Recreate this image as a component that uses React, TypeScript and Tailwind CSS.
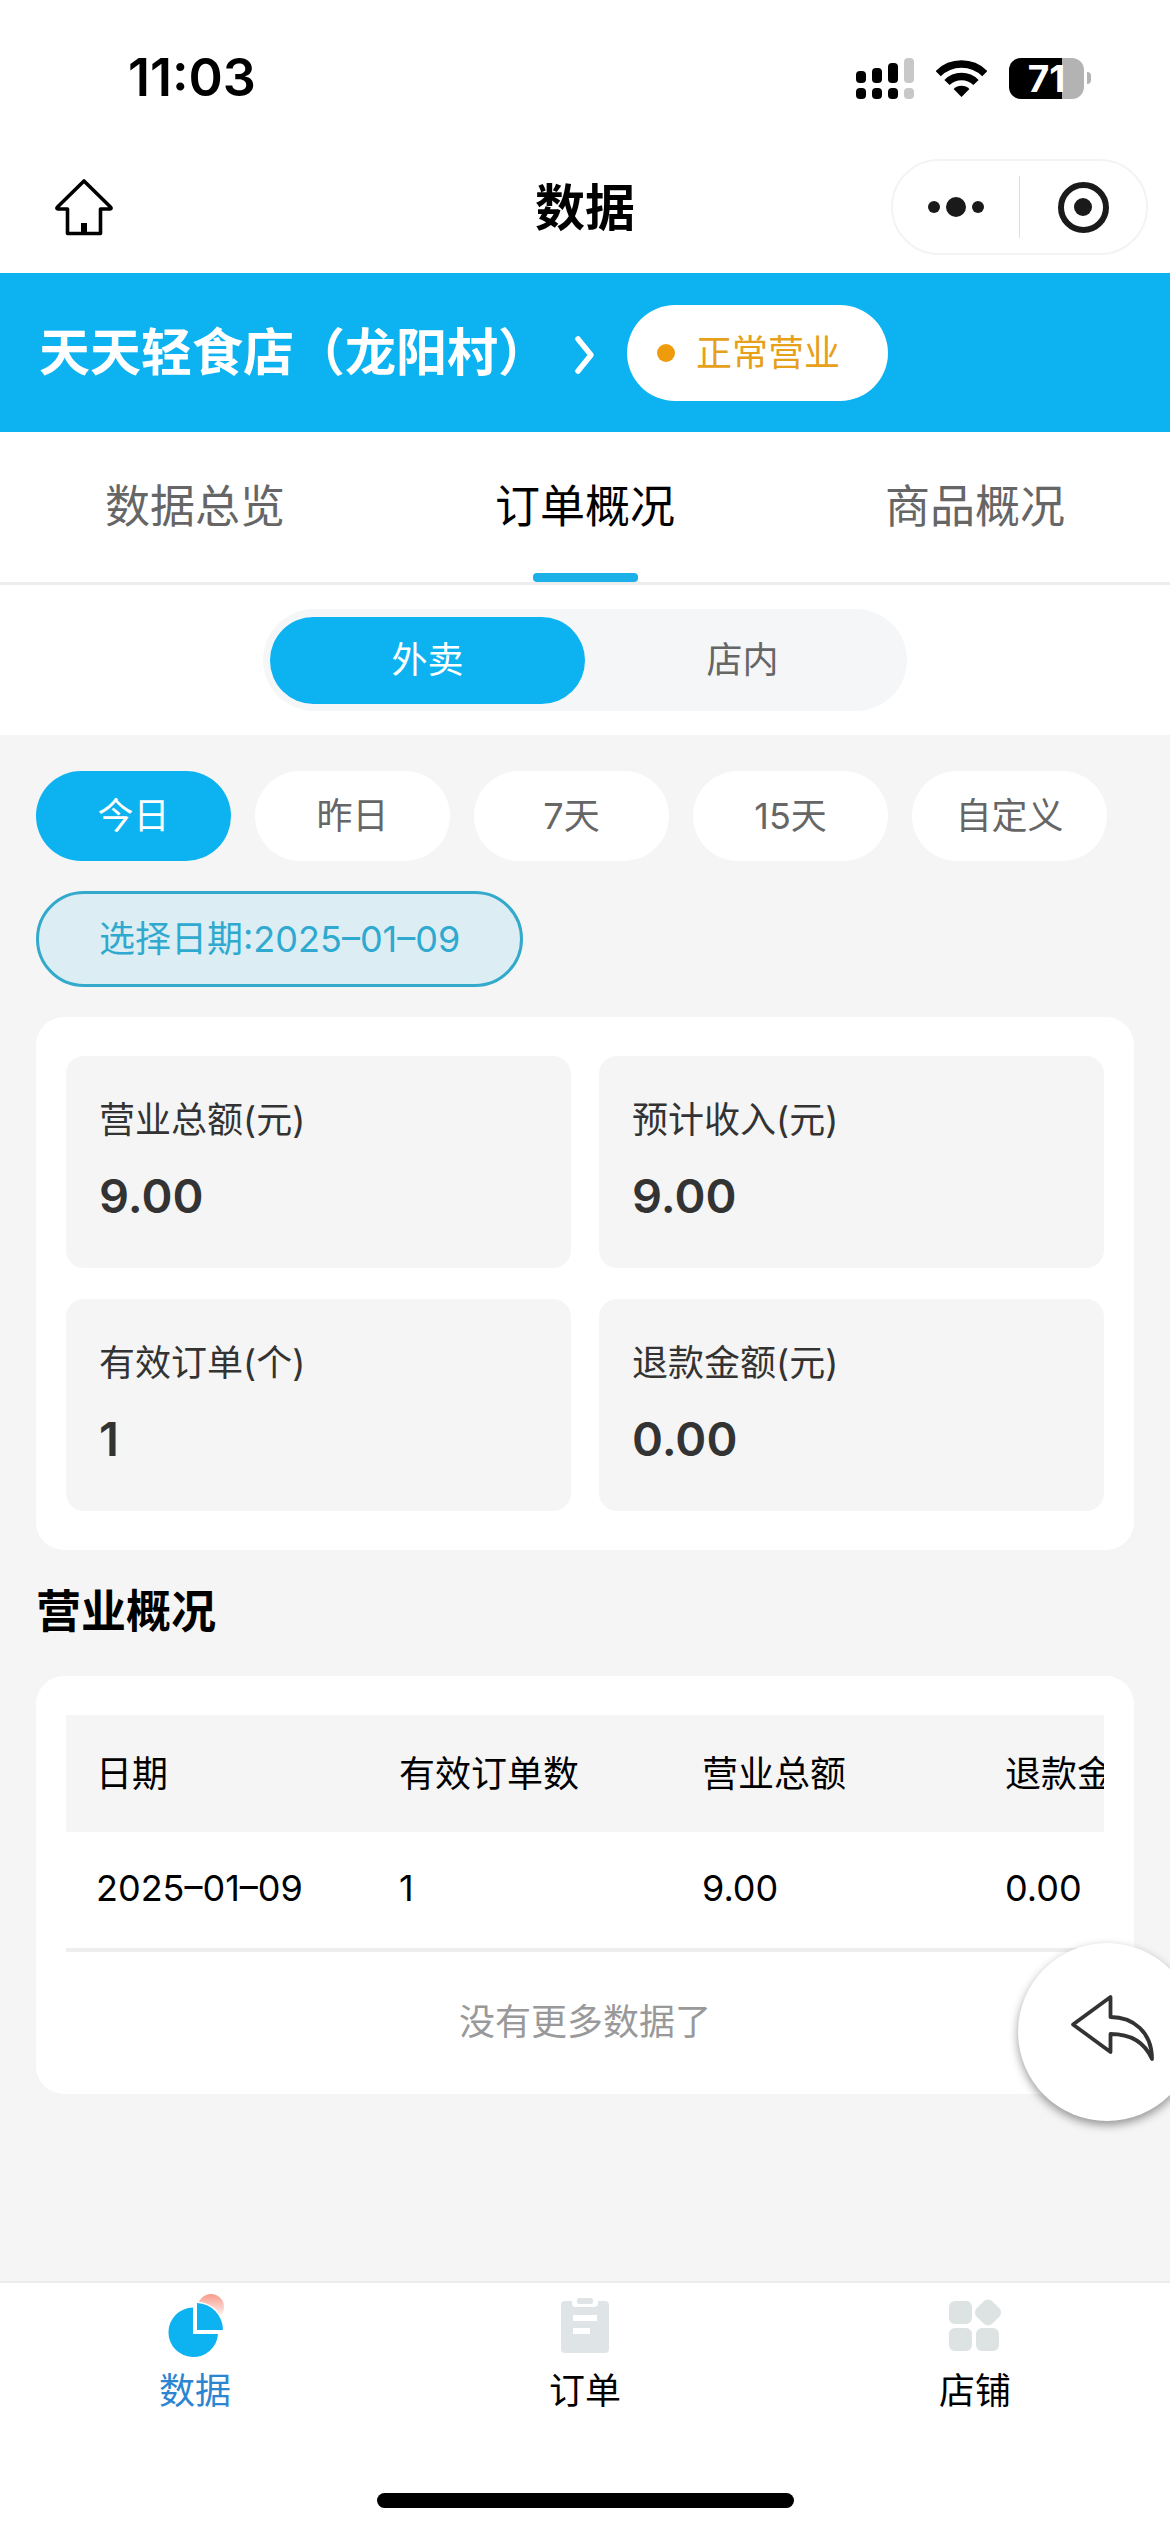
import React, { useState } from "react";

const orderTypes = ["外卖", "店内"];
const ranges = ["今日", "昨日", "7天", "15天", "自定义"];
const stats = [
  { label: "营业总额(元)", value: "9.00" },
  { label: "预计收入(元)", value: "9.00" },
  { label: "有效订单(个)", value: "1" },
  { label: "退款金额(元)", value: "0.00" },
];
const columns = ["日期", "有效订单数", "营业总额", "退款金额"];
const rows = [["2025–01–09", "1", "9.00", "0.00"]];

function SignalIcon() {
  return (
    <svg className="h-[41px] w-[58px]" viewBox="0 0 58 41" aria-hidden="true">
      <rect x="0" y="13" width="10" height="12" rx="4" />
      <rect x="16" y="10" width="10" height="15" rx="4" />
      <rect x="32" y="5" width="10" height="20" rx="4" />
      <rect x="48" y="0" width="10" height="25" rx="4" fill="#c8c8c8" />
      <rect x="0" y="30" width="10" height="11" rx="4" />
      <rect x="16" y="30" width="10" height="11" rx="4" />
      <rect x="32" y="30" width="10" height="11" rx="4" />
      <rect x="48" y="30" width="10" height="11" rx="4" fill="#c8c8c8" />
    </svg>
  );
}

function WifiIcon() {
  return (
    <svg className="h-[37px] w-[51px]" viewBox="0 0 51 37" aria-hidden="true">
      <g fill="none" stroke="#000" strokeWidth="7.4">
        <path d="M2.2 13.7a33 33 0 0 1 46.6 0" />
        <path d="M11 22.5a20.5 20.5 0 0 1 29 0" />
      </g>
      <path d="M25.5 37 17.6 29a11.2 11.2 0 0 1 15.8 0Z" />
    </svg>
  );
}

function HomeIcon() {
  return (
    <svg className="h-[58px] w-[60px]" viewBox="0 0 60 58" aria-hidden="true">
      <path
        d="M13.5 31H4Q2 30.500 3.500 29L30 3L56.500 29Q58 30.500 56 31H46.500V55.500H13.500Z"
        fill="none"
        stroke="#000"
        strokeWidth="3.6"
        strokeLinejoin="round"
      />
      <rect x="27" y="45" width="6" height="10" />
    </svg>
  );
}

function ReplyIcon() {
  return (
    <svg className="h-[70px] w-[86px]" viewBox="0 0 86 70" aria-hidden="true">
      <path
        d="M3 31.500 40.500 4V24C63 24 82 39 82 66C75 50 62 41 40.500 41V59Z"
        fill="none"
        stroke="#333"
        strokeWidth="3.8"
        strokeLinejoin="round"
      />
    </svg>
  );
}

function PieIcon() {
  return (
    <svg className="h-[68px] w-[60px]" viewBox="0 0 60 68" aria-hidden="true">
      <defs>
        <linearGradient id="glow" x1="0" y1="0" x2="0" y2="1">
          <stop offset="0" stopColor="#f79b8a" />
          <stop offset="0.7" stopColor="#fde3df" />
          <stop offset="1" stopColor="#fff" />
        </linearGradient>
      </defs>
      <circle cx="46" cy="16" r="13" fill="url(#glow)" />
      <path d="M32 12A27 27 0 0 1 58 39H32Z" fill="#0cb3f0" stroke="#fff" strokeWidth="3" paintOrder="stroke" />
      <path d="M28 16.500A24.800 24.800 0 1 0 53 43H28Z" fill="#0cb3f0" />
    </svg>
  );
}

function ClipboardIcon() {
  return (
    <svg className="h-[68px] w-[60px]" viewBox="0 0 60 68" aria-hidden="true">
      <rect x="6" y="10" width="48" height="52" rx="4" fill="#dfe4e6" />
      <rect x="17" y="5" width="26" height="11" rx="4" fill="#fff" />
      <rect x="22" y="7" width="16" height="6" rx="2" fill="#dfe4e6" />
      <path d="M18 24h24v6H18zM18 37h17v6H18z" fill="#fff" />
    </svg>
  );
}

function GridIcon() {
  return (
    <svg className="h-[68px] w-[60px]" viewBox="0 0 60 68" fill="#dde3e3" aria-hidden="true">
      <rect x="4" y="10" width="23" height="23" rx="6" />
      <rect x="4" y="37" width="23" height="23" rx="6" />
      <rect x="31" y="37" width="23" height="23" rx="6" />
      <rect x="32" y="10.500" width="22" height="22" rx="6" transform="rotate(45 43 21.500)" />
    </svg>
  );
}

const navItems = [
  { label: "数据", icon: <PieIcon />, active: true },
  { label: "订单", icon: <ClipboardIcon />, active: false },
  { label: "店铺", icon: <GridIcon />, active: false },
];

export default function App() {
  const [orderType, setOrderType] = useState("外卖");
  const [range, setRange] = useState("今日");

  return (
    <div className="flex min-h-screen flex-col overflow-x-clip bg-[#f5f5f5] font-[Inter,'Noto_Sans_CJK_SC',sans-serif] text-4xl text-black">
      <header className="bg-white">
        <div className="flex h-[144px] items-center justify-between pt-3 pr-[79px] pl-32">
          <span className="text-[52px] leading-[60px] font-semibold">11:03</span>
          <div className="flex items-center gap-[22px]">
            <SignalIcon />
            <WifiIcon />
            <div className="flex items-center gap-[3px]">
              <div className="flex h-[41px] w-[75px] items-center justify-center rounded-xl bg-linear-to-r from-black from-71% to-[#b3b3b3] to-71% text-[37px] leading-[41px] font-bold text-white">
                71
              </div>
              <div className="h-3 w-1 rounded-r-full bg-[#b3b3b3]" />
            </div>
          </div>
        </div>
        <div className="grid h-[129px] grid-cols-3 items-start px-[22px]">
          <button type="button" aria-label="首页" className="mt-[34px] ml-8 justify-self-start">
            <HomeIcon />
          </button>
          <h1 className="mt-[34px] text-center text-[50px] leading-[60px] font-bold">数据</h1>
          <div className="mt-[15px] flex h-24 w-[257px] items-center justify-self-end rounded-full border-2 border-[#f3f3f3]">
            <button type="button" aria-label="更多" className="flex flex-1 items-center justify-center gap-1.5">
              <span className="size-3 rounded-full bg-[#1a1a1a]" />
              <span className="size-5 rounded-full bg-[#1a1a1a]" />
              <span className="size-3 rounded-full bg-[#1a1a1a]" />
            </button>
            <span className="h-[62px] w-px bg-[#dedede]" />
            <button type="button" aria-label="关闭" className="flex flex-1 items-center justify-center">
              <span className="flex size-[51px] items-center justify-center rounded-full border-[6px] border-[#1a1a1a]">
                <span className="size-[18px] rounded-full bg-[#1a1a1a]" />
              </span>
            </button>
          </div>
        </div>
      </header>

      <section className="flex h-[159px] items-center bg-[#0cb3f0] pl-[39px] text-white">
        <button type="button" className="flex items-center">
          <span className="text-[51px] leading-[60px] font-bold">天天轻食店（龙阳村）</span>
          <svg className="mt-1 ml-6 h-10 w-[26px]" viewBox="0 0 26 40" aria-hidden="true">
            <path d="M5 4 18 20 5 36" fill="none" stroke="#fff" strokeWidth="5.500" strokeLinecap="round" strokeLinejoin="round" />
          </svg>
        </button>
        <span className="ml-7 flex h-24 w-[261px] items-center rounded-full bg-white pl-[30px] text-[#e6a01a]">
          <span className="mr-[21px] size-[18px] rounded-full bg-[#ee9c0c]" />
          正常营业
        </span>
      </section>

      <nav className="grid h-[153px] grid-cols-3 border-b-[3px] border-[#ededed] bg-white text-[45px] leading-[60px]">
        <a href="#overview" className="pt-[45px] text-center text-[#666]">数据总览</a>
        <a href="#orders" aria-current="page" className="flex flex-col items-center justify-between pt-[45px]">
          订单概况
          <span className="h-[9px] w-[105px] rounded-sm bg-[#1cb0e8]" />
        </a>
        <a href="#goods" className="pt-[45px] text-center text-[#666]">商品概况</a>
      </nav>

      <div className="flex justify-center bg-white py-6">
        <div className="flex h-[102px] w-[644px] items-center rounded-full bg-[#f4f6f8] px-[7px]">
          {orderTypes.map((type) => (
            <button
              key={type}
              type="button"
              aria-pressed={type === orderType}
              onClick={() => setOrderType(type)}
              className={
                type === orderType
                  ? "h-[87px] flex-1 rounded-full bg-[#0cb3f0] text-white"
                  : "h-[87px] flex-1 rounded-full text-[#666]"
              }
            >
              {type}
            </button>
          ))}
        </div>
      </div>

      <main className="flex-1 px-9 pt-9">
        <div className="flex gap-6">
          {ranges.map((item) => (
            <button
              key={item}
              type="button"
              aria-pressed={item === range}
              onClick={() => setRange(item)}
              className={
                item === range
                  ? "h-[90px] w-[195px] rounded-full bg-[#0cb3f0] text-white"
                  : "h-[90px] w-[195px] rounded-full bg-white text-[#666]"
              }
            >
              {item}
            </button>
          ))}
        </div>
        <button
          type="button"
          className="mt-[30px] block h-24 rounded-full border-[3px] border-[#33a9cc] bg-[#dceef3] px-[60px] text-[#2fa9cf]"
        >
          选择日期:2025–01–09
        </button>

        <section className="mt-[30px] grid grid-cols-2 gap-x-7 gap-y-[31px] rounded-[28px] bg-white px-[30px] py-[39px]">
          {stats.map((stat) => (
            <div key={stat.label} className="h-[212px] rounded-[18px] bg-[#f5f5f5] px-[33px] pt-[34px] text-[#333]">
              <p className="leading-[60px]">{stat.label}</p>
              <p className="mt-4 text-[47px] leading-[60px] font-semibold">{stat.value}</p>
            </div>
          ))}
        </section>

        <h2 className="mt-8 text-[45px] leading-[60px] font-bold">营业概况</h2>

        <section className="mt-[34px] rounded-[28px] bg-white px-[30px] pt-[39px] pb-[42px]">
          <div className="overflow-x-auto [scrollbar-width:none]">
            <table className="w-[1212px] table-fixed text-left">
              <thead className="bg-[#f5f5f5]">
                <tr className="h-[117px]">
                  {columns.map((column) => (
                    <th key={column} scope="col" className="pl-[30px] font-normal">{column}</th>
                  ))}
                </tr>
              </thead>
              <tbody>
                {rows.map((row) => (
                  <tr key={row[0]} className="h-[118px] border-b-4 border-[#eee]">
                    {row.map((cell, i) => (
                      <td key={columns[i]} className="pb-1 pl-[30px]">{cell}</td>
                    ))}
                  </tr>
                ))}
              </tbody>
            </table>
          </div>
          <p className="mt-10 text-center leading-[60px] text-[#999]">没有更多数据了</p>
        </section>
      </main>

      <button
        type="button"
        aria-label="返回"
        className="fixed -right-[26px] bottom-[411px] flex size-[178px] items-center justify-center rounded-full bg-white pb-2 pl-3 shadow-[0_4px_10px_rgba(0,0,0,0.4)]"
      >
        <ReplyIcon />
      </button>

      <footer className="border-t-2 border-[#ececec] bg-white">
        <nav className="grid grid-cols-3 pt-2">
          {navItems.map((item) => (
            <a
              key={item.label}
              href={"#" + item.label}
              className={
                item.active
                  ? "flex flex-col items-center gap-0.5 leading-[60px] text-[#2b85d0]"
                  : "flex flex-col items-center gap-0.5 leading-[60px]"
              }
            >
              {item.icon}
              <span>{item.label}</span>
            </a>
          ))}
        </nav>
        <div className="mx-auto mt-[72px] mb-6 h-[15px] w-[417px] rounded-full bg-black" />
      </footer>
    </div>
  );
}
